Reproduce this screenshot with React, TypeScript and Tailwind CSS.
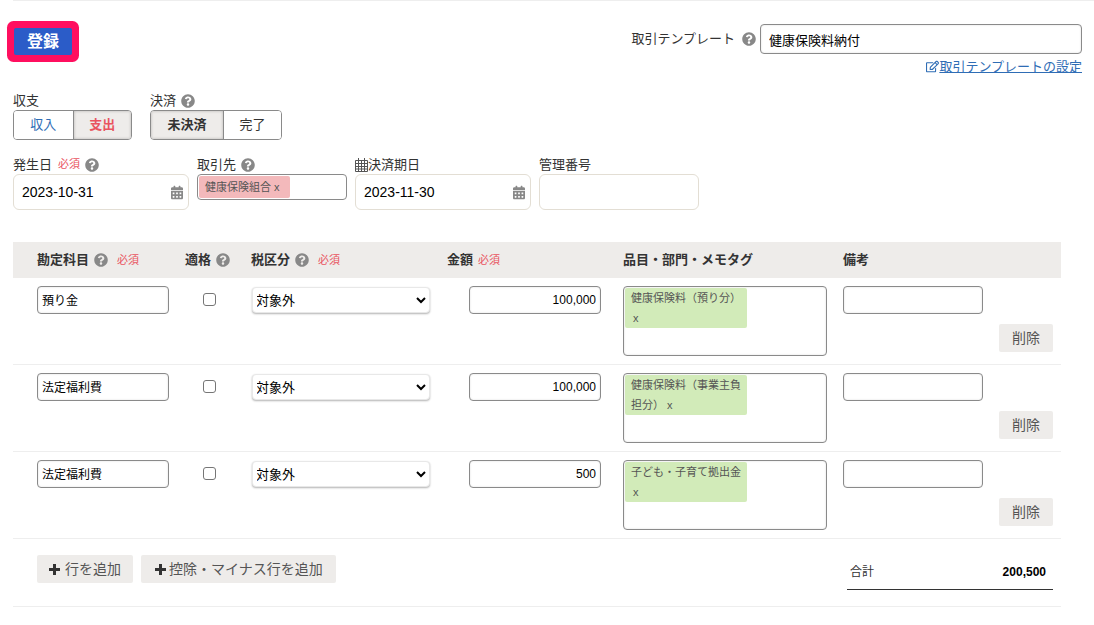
import React from 'react';
import { FaCalendarAlt, FaQuestionCircle, FaRegEdit } from 'react-icons/fa';

const FONT = "font-['Liberation_Sans','Noto_Sans_CJK_JP',sans-serif]";

const ROWS = [
  { account: '預り金', amount: '100,000', tag: '健康保険料（預り分）', tagX: true },
  { account: '法定福利費', amount: '100,000', tag: '健康保険料（事業主負担分） x', tagX: false },
  { account: '法定福利費', amount: '500', tag: '子ども・子育て拠出金', tagX: true }
];

const Help = () => <FaQuestionCircle className="inline-block h-[14px] w-[14px] text-[#888]" />;
const Required = ({ className = '' }: { className?: string }) => (
  <span className={`text-[11px] font-normal text-[#e9545f] ${className}`}>必須</span>
);

const PlusIcon = () => (
  <svg viewBox="0 0 11 11" className="h-[11px] w-[11px] fill-[#333]">
    <path d="M4 0h3v4h4v3H7v4H4V7H0V4h4z" />
  </svg>
);

const GridCalendar = () => (
  <svg viewBox="0 0 13 14" className="h-[14px] w-[13px] fill-none stroke-[#555]">
    <path d="M.5 2.5h12v11H.5zM.5 5.5h12M.5 8.5h12M.5 11h12M3.5 2.5v11M6.5 2.5v11M9.5 2.5v11M3.5 0v3M9.5 0v3" />
  </svg>
);

const inputClass =
  'rounded-[4px] border border-[#8a8a8a] bg-white text-black outline-none shadow-[inset_0_0_2px_rgba(0,0,0,0.15)]';

function DateField({ value, width }: { value: string; width: string }) {
  return (
    <div className={`relative h-[36px] ${width} rounded-[6px] border border-[#e3ded4] bg-white`}>
      <input readOnly defaultValue={value} className="h-full w-full bg-transparent pl-[8px] text-[14px] text-black outline-none" />
      <FaCalendarAlt className="absolute right-[5px] top-[10px] h-[15px] w-[12px] text-[#888]" />
    </div>
  );
}

function Segmented({ items, active, activeColor, width }: { items: string[]; active: number; activeColor: string; width: string[] }) {
  return (
    <div className="flex h-[30px] overflow-hidden rounded-[4px] border border-[#8a8a8a] text-[13px]">
      {items.map((item, i) => (
        <div
          key={item}
          className={`flex items-center justify-center ${width[i]} ${i > 0 ? 'border-l border-[#8a8a8a]' : ''} ${
            i === active ? `bg-[#eeecea] font-bold shadow-[inset_0_0_3px_rgba(0,0,0,0.25)] ${activeColor}` : 'bg-white'
          }`}
        >
          {item}
        </div>
      ))}
    </div>
  );
}

export default function App() {
  return (
    <div className={`${FONT} h-[625px] overflow-hidden bg-white text-[13px] text-[#333]`}>
      <div className="ml-[13px] border-t border-[#eeeeee]">
        <div className="flex items-start justify-between pr-[12px]">
          <button className="ml-[1px] mt-[27px] h-[27px] w-[58px] rounded-[2px] bg-[#2b5cc8] text-[16px] font-bold text-white ring-[7px] ring-[#ff0f5f]">
            登録
          </button>
          <div className="mt-[23px] flex flex-col items-end">
            <div className="flex items-center">
              <span>取引テンプレート</span>
              <span className="ml-[7px] mr-[4px] flex"><Help /></span>
              <input readOnly defaultValue="健康保険料納付" className={`h-[30px] w-[322px] pl-[8px] text-[13px] ${inputClass}`} />
            </div>
            <a className="mt-[5px] flex items-center text-[13px] leading-[15px] text-[#2f6db5] underline">
              <FaRegEdit className="h-[13px] w-[13px]" />
              取引テンプレートの設定
            </a>
          </div>
        </div>

        <div className="mt-[19px] flex">
          <div className="w-[137px]">
            <div className="h-[17px] leading-[16px]">収支</div>
            <div className="w-[119px]">
              <Segmented items={['収入', '支出']} active={1} activeColor="text-[#e9545f]" width={['w-[59px] text-[#2f6db5]', 'w-[59px]']} />
            </div>
          </div>
          <div>
            <div className="flex h-[17px] items-start gap-[5px] leading-[16px]">決済 <span className="flex pt-[1px]"><Help /></span></div>
            <div className="w-[132px]">
              <Segmented items={['未決済', '完了']} active={0} activeColor="text-[#333]" width={['w-[72px]', 'w-[58px]']} />
            </div>
          </div>
        </div>

        <div className="mt-[16px] flex items-start gap-[8px]">
          <div>
            <div className="mb-[1px] flex h-[17px] items-center">発生日<Required className="ml-[6px] mr-[5px]" /><Help /></div>
            <DateField value="2023-10-31" width="w-[176px]" />
          </div>
          <div>
            <div className="mb-[1px] flex h-[17px] items-center gap-[5px]">取引先 <Help /></div>
            <div className="flex h-[26px] w-[150px] rounded-[4px] border border-[#8a8a8a] bg-white p-[1px]">
              <span className="flex items-center rounded-[2px] bg-[#f3b9bb] pl-[6px] pr-[10px] text-[11px] text-[#555]">健康保険組合 x</span>
            </div>
          </div>
          <div>
            <div className="mb-[1px] flex h-[17px] items-center"><GridCalendar />決済期日</div>
            <DateField value="2023-11-30" width="w-[176px]" />
          </div>
          <div>
            <div className="mb-[1px] flex h-[17px] items-center">管理番号</div>
            <div className="h-[36px] w-[160px] rounded-[6px] border border-[#e3ded4] bg-white" />
          </div>
        </div>

        <div className="mt-[32px] w-[1048px]">
          <div className="grid h-[36px] grid-cols-[172px_66px_196px_176px_220px_218px] items-center bg-[#eeecea] font-bold">
            <div className="flex items-center pl-[24px]">勘定科目<span className="ml-[5px] flex"><Help /></span><Required className="ml-[9px]" /></div>
            <div className="flex items-center">適格<span className="ml-[5px] flex"><Help /></span></div>
            <div className="flex items-center">税区分<span className="ml-[5px] flex"><Help /></span><Required className="ml-[9px]" /></div>
            <div className="flex items-center">金額<Required className="ml-[5px]" /></div>
            <div>品目・部門・メモタグ</div>
            <div>備考</div>
          </div>

          {ROWS.map((row, i) => (
            <div key={i} className="grid h-[87px] grid-cols-[172px_66px_196px_176px_220px_218px] items-start border-b border-[#eeeeee] pt-[8px]">
              <div className="pl-[24px]">
                <input readOnly defaultValue={row.account} className={`h-[28px] w-[132px] pb-[2px] pl-[4px] text-[12px] ${inputClass}`} />
              </div>
              <div className="flex pl-[18px] pt-[7px]">
                <input type="checkbox" readOnly className="h-[13px] w-[13px] appearance-none rounded-[3px] border border-[#767676] bg-white" />
              </div>
              <div className="pl-[1px] pt-[1px]">
                <select className="h-[26px] w-[178px] rounded-[4px] border border-[#e8e8e8] bg-white indent-[-1px] text-[13px] text-black shadow-[0_1px_2px_rgba(0,0,0,0.3)] outline-none">
                  <option>対象外</option>
                </select>
              </div>
              <div className="pl-[22px]">
                <input readOnly defaultValue={row.amount} className={`h-[28px] w-[132px] pb-[1px] pr-[4px] text-right text-[12px] ${inputClass}`} />
              </div>
              <div>
                <div className={`h-[70px] w-[204px] pl-[1px] pt-[1px] ${inputClass}`}>
                  <div className="w-[122px] rounded-[2px] bg-[#d2ebb9] px-[6px] text-[11px] leading-[20px] text-[#555]">
                    {row.tag}
                    {row.tagX && <div className="pl-[2px]">x</div>}
                  </div>
                </div>
              </div>
              <div className="flex flex-col">
                <input readOnly className={`h-[28px] w-[140px] ${inputClass}`} />
                <button className="ml-[156px] mt-[10px] h-[28px] w-[54px] rounded-[2px] bg-[#eeecea] text-[14px] text-[#555]">削除</button>
              </div>
            </div>
          ))}

          <div className="flex h-[68px] items-start justify-between border-b border-[#eeeeee] pl-[24px] pr-[8px]">
            <div className="mt-[16px] flex gap-[8px]">
              <button className="flex h-[28px] items-center gap-[5px] rounded-[2px] bg-[#eeecea] px-[12px] text-[14px] text-[#555]">
                <PlusIcon />行を追加
              </button>
              <button className="flex h-[28px] items-center gap-[3px] rounded-[2px] bg-[#eeecea] pl-[14px] pr-[13px] text-[14px] text-[#555]">
                <PlusIcon />控除・マイナス行を追加
              </button>
            </div>
            <div className="mt-[16px] flex h-[35px] w-[206px] items-center justify-between border-b border-[#333] px-[3px] pr-[7px] text-[12px]">
              <span>合計</span>
              <span className="font-bold text-black">200,500</span>
            </div>
          </div>
        </div>
      </div>
    </div>
  );
}
